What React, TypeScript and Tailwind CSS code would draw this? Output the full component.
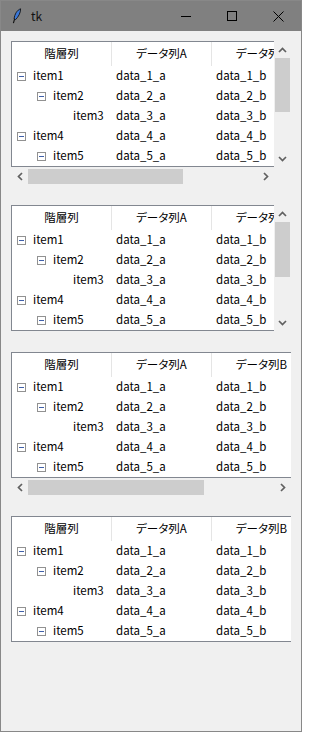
import React from 'react';

type Row = { level: number; name: string; a: string; b: string; parent: boolean };

const ROWS: Row[] = [
  { level: 0, name: 'item1', a: 'data_1_a', b: 'data_1_b', parent: true },
  { level: 1, name: 'item2', a: 'data_2_a', b: 'data_2_b', parent: true },
  { level: 2, name: 'item3', a: 'data_3_a', b: 'data_3_b', parent: false },
  { level: 0, name: 'item4', a: 'data_4_a', b: 'data_4_b', parent: true },
  { level: 1, name: 'item5', a: 'data_5_a', b: 'data_5_b', parent: true },
];

const INDENT = ['w-[5px]', 'w-[25px]', 'w-[45px]'];

function Chevron({ dir }: { dir: 'up' | 'down' | 'left' | 'right' }) {
  const d = {
    up: 'M1 5 L4.5 1.5 L8 5',
    down: 'M1 1 L4.5 4.5 L8 1',
    left: 'M5 1 L1.5 4.5 L5 8',
    right: 'M1 1 L4.5 4.5 L1 8',
  }[dir];
  const vertical = dir === 'up' || dir === 'down';
  return (
    <svg width={vertical ? 9 : 6} height={vertical ? 6 : 9} viewBox={vertical ? '0 0 9 6' : '0 0 6 9'}>
      <path d={d} stroke="#606060" strokeWidth="1.7" fill="none" />
    </svg>
  );
}

function VScroll({ thumb }: { thumb: string }) {
  return (
    <div className="flex w-[17px] shrink-0 flex-col">
      <div className="flex h-[17px] items-center justify-center">
        <Chevron dir="up" />
      </div>
      <div className="flex-1">
        <div className={`mx-px bg-[#cdcdcd] ${thumb}`} />
      </div>
      <div className="flex h-[17px] items-center justify-center">
        <Chevron dir="down" />
      </div>
    </div>
  );
}

function HScroll({ thumb, wide }: { thumb: string; wide: boolean }) {
  return (
    <div className={`mt-px flex h-[17px] ${wide ? 'w-[280px]' : 'w-[263px]'}`}>
      <div className="flex w-[17px] items-center justify-center">
        <Chevron dir="left" />
      </div>
      <div className="flex-1 py-px">
        <div className={`h-full bg-[#cdcdcd] ${thumb}`} />
      </div>
      <div className="flex w-[17px] items-center justify-center">
        <Chevron dir="right" />
      </div>
    </div>
  );
}

function Tree() {
  return (
    <div className="h-[126px] min-w-0 flex-1 overflow-hidden border-b border-l border-t border-[#828790] bg-white">
      <div className="flex h-[24px] w-[300px]">
        {['階層列', 'データ列A', 'データ列B'].map((h) => (
          <div
            key={h}
            className="flex h-full w-[100px] shrink-0 items-center justify-center border-r border-[#e5e5e5] pb-px"
          >
            {h}
          </div>
        ))}
      </div>
      {ROWS.map((r) => (
        <div key={r.name} className="flex h-[20px] w-[300px] items-center">
          <div className="flex w-[100px] shrink-0 items-center">
            <div className={`${INDENT[r.level]} shrink-0`} />
            <div
              className={`flex h-[9px] w-[9px] shrink-0 items-center justify-center ${
                r.parent ? 'border border-[#919191]' : ''
              }`}
            >
              {r.parent && <div className="h-px w-[5px] bg-[#3f5fa8]" />}
            </div>
            <span className="ml-[7px]">{r.name}</span>
          </div>
          <div className="w-[100px] shrink-0 pl-[4px]">{r.a}</div>
          <div className="w-[100px] shrink-0 pl-[4px]">{r.b}</div>
        </div>
      ))}
    </div>
  );
}

function Block({
  vthumb,
  hthumb,
  className,
}: {
  vthumb?: string;
  hthumb?: string;
  className: string;
}) {
  return (
    <div className={`flex w-[280px] flex-col ${className}`}>
      <div className="flex">
        <Tree />
        {vthumb && <VScroll thumb={vthumb} />}
      </div>
      {hthumb && <HScroll thumb={hthumb} wide={!vthumb} />}
    </div>
  );
}

function Feather() {
  return (
    <svg width="10" height="16" viewBox="0 0 10 16">
      <path d="M8.6 0.8 C5.2 2 2.6 6 2.1 11 L3.6 11.6 C6.2 9 8.7 5 8.6 0.8 Z" fill="#3b78d8" stroke="#111" strokeWidth="0.9" />
      <path d="M2.6 11 L1.4 15.2" stroke="#111" strokeWidth="1.1" />
    </svg>
  );
}

export default function App() {
  return (
    <div
      className="flex h-[732px] w-[302px] flex-col border border-[#888888] bg-[#f0f0f0] text-[11.5px] text-black [font-feature-settings:'palt']"
      style={{ fontFamily: "'Noto Sans CJK JP', 'Noto Sans', sans-serif" }}
    >
      {/* title bar */}
      <div className="flex h-[30px] shrink-0 items-center bg-[#808080]">
        <div className="ml-[11px] flex w-[10px] justify-center">
          <Feather />
        </div>
        <span className="ml-[9px] text-[12px] text-[#111]">tk</span>
        <div className="ml-auto flex h-full">
          <div className="flex w-[46px] items-center justify-center">
            <div className="h-px w-[10px] bg-black" />
          </div>
          <div className="flex w-[46px] items-center justify-center">
            <div className="h-[10px] w-[10px] border border-black" />
          </div>
          <div className="flex w-[46px] items-center justify-center">
            <svg width="11" height="11" viewBox="0 0 11 11">
              <path d="M0.5 0.5 L10.5 10.5 M10.5 0.5 L0.5 10.5" stroke="#000" strokeWidth="1" />
            </svg>
          </div>
        </div>
      </div>

      <div className="flex flex-col pl-[10px]">
        <Block className="mt-[10px]" vthumb="h-[54px]" hthumb="w-[155px]" />
        <Block className="mt-[20px]" vthumb="h-[55px]" />
        <Block className="mt-[21px]" hthumb="w-[176px]" />
        <Block className="mt-[20px]" />
      </div>
    </div>
  );
}
